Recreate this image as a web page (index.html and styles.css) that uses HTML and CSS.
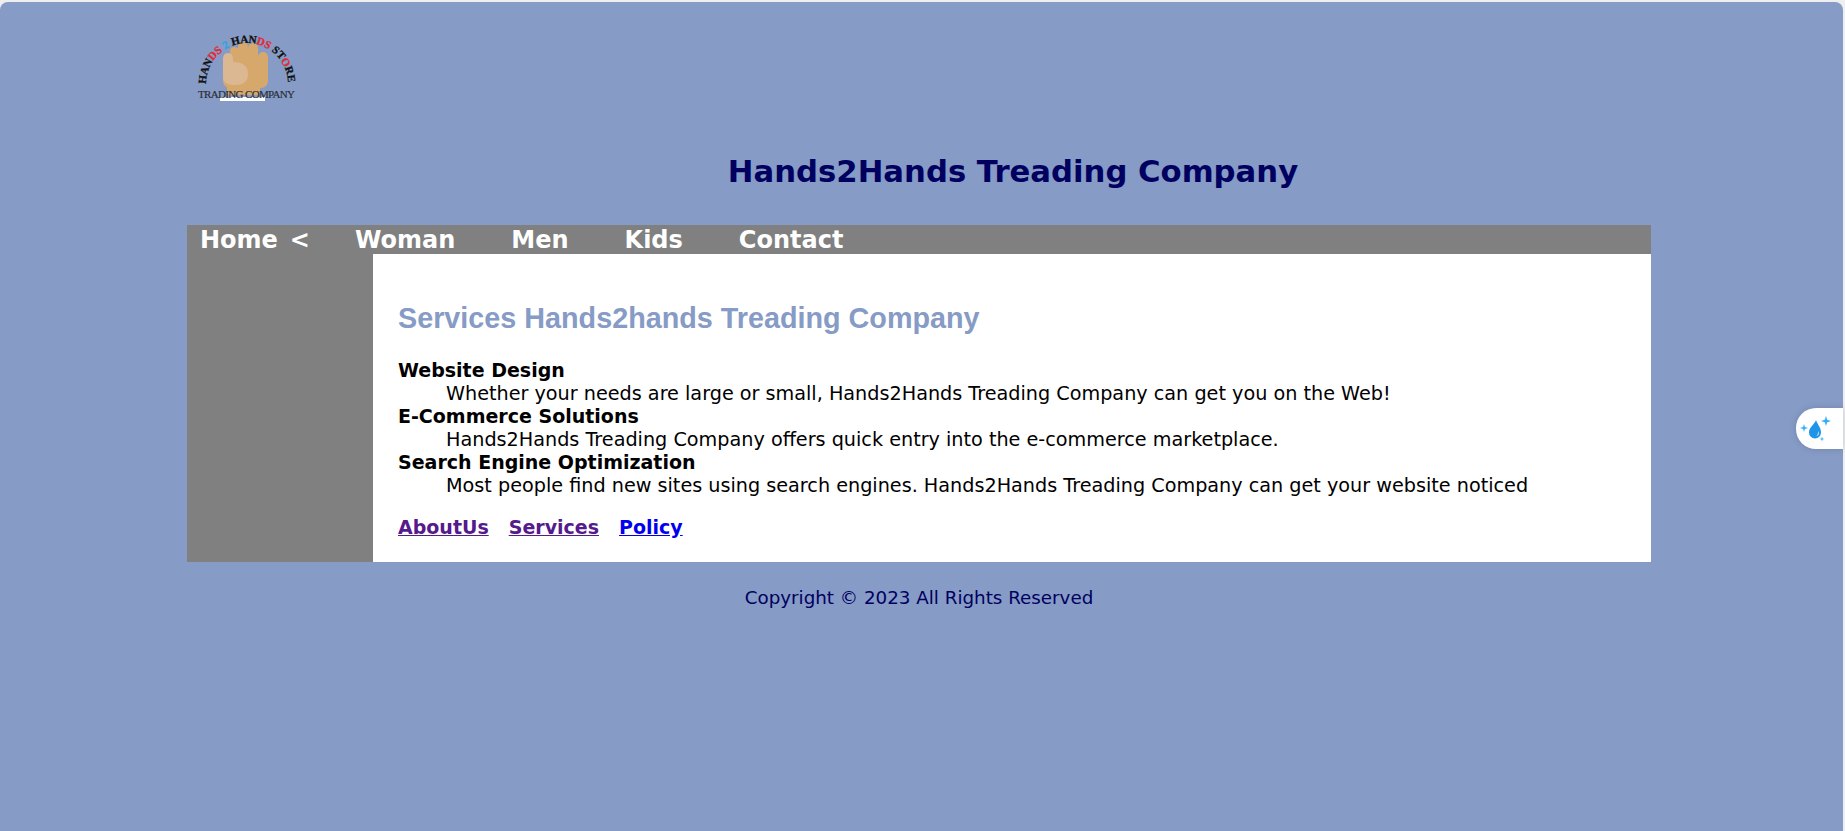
FILE: index.html
```html
<!DOCTYPE html>
<html lang="en">
<head>
<meta charset="utf-8">
<title>Services</title>
<link rel="stylesheet" href="styles.css">
</head>
<body>
<div class="page">
  <div class="wrap">
    <header class="header">
      <svg class="logo" width="120" height="80" viewBox="0 0 120 80" aria-hidden="true">
        <defs><filter id="soft"><feGaussianBlur stdDeviation="0.4"/></filter></defs>
        <g filter="url(#soft)">
          <g class="fist">
            <rect x="43" y="19" width="9" height="30" rx="4.500"/>
            <rect x="51" y="14" width="10" height="30" rx="5"/>
            <rect x="61" y="15" width="10" height="30" rx="5"/>
            <rect x="71" y="24" width="10" height="30" rx="5"/>
            <rect x="36" y="30" width="45" height="30" rx="7"/>
            <rect x="40" y="55" width="33" height="12"/>
          </g>
          <path class="thumb" d="M36 31q0-6 5-6t5 6v3q15 0 15 12 0 11-13 11-12 0-12-8z"/>
          <rect class="strip" x="33" y="69" width="45" height="4"/>
        </g>
        <path id="arc" d="M19 56A41 41 0 0 1 101 56" fill="none"/>
        <text class="logo-arc"><textPath href="#arc" textLength="127">HAN<tspan class="logo-red">DS</tspan> <tspan class="logo-blue">2</tspan> HAN<tspan class="logo-red">DS</tspan> ST<tspan class="logo-red">O</tspan>RE</textPath></text>
        <text class="logo-sub" x="11" y="70" textLength="97">TRADING COMPANY</text>
      </svg>
      <h1 class="title">Hands2Hands Treading Company</h1>
    </header>
    <nav class="nav">
      <a class="nav-link nav-home" href="#">Home&nbsp; &lt;</a>
      <a class="nav-link" href="#">Woman</a>
      <a class="nav-link" href="#">Men</a>
      <a class="nav-link" href="#">Kids</a>
      <a class="nav-link" href="#">Contact</a>
    </nav>
    <div class="body-row">
      <aside class="sidebar"></aside>
      <main class="content">
        <h2 class="heading">Services Hands2hands Treading Company</h2>
        <dl class="list">
          <dt>Website Design</dt>
          <dd>Whether your needs are large or small, Hands2Hands Treading Company can get you on the Web!</dd>
          <dt>E-Commerce Solutions</dt>
          <dd>Hands2Hands Treading Company offers quick entry into the e-commerce marketplace.</dd>
          <dt>Search Engine Optimization</dt>
          <dd>Most people find new sites using search engines. Hands2Hands Treading Company can get your website noticed</dd>
        </dl>
        <p class="links">
          <a class="visited" href="#">AboutUs</a>
          <a class="visited" href="#">Services</a>
          <a class="fresh" href="#">Policy</a>
        </p>
      </main>
    </div>
    <footer class="footer">Copyright © 2023 All Rights Reserved</footer>
  </div>
  <div class="float-tab">
    <svg width="47" height="41" viewBox="0 0 47 41" aria-hidden="true">
      <path d="M20 12c-1 4-7 7-7 12.500a6 6 0 0 0 12 0C25 19 21 16 20 12z" fill="#1f95e8"/>
      <path d="M22.500 23q1.500 4-2 5.500 1.500-2.500 2-5.500z" fill="#bfe3fb"/>
      <path d="M30 8l1.200 3.800L35 13l-3.800 1.200L30 18l-1.200-3.800L25 13l3.800-1.200z" fill="#35aef5"/>
      <path d="M8 16l.9 3.100L12 20l-3.100.9L8 24l-.9-3.100L4 20l3.100-.9z" fill="#35aef5"/>
      <path d="M26 28.500l.6 1.900 1.900.6-1.900.6-.6 1.900-.6-1.900-1.900-.6 1.900-.6z" fill="#35aef5"/>
    </svg>
  </div>
</div>
</body>
</html>
```
FILE: styles.css
```css
html, body {
  margin: 0;
  padding: 0;
  height: 100%;
  background: #efefef;
  overflow: hidden;
}
.page {
  position: relative;
  box-sizing: border-box;
  height: 829px;
  margin: 2px 2px 0 0;
  background: #869bc5;
  border-radius: 8px 8px 0 0;
  padding: 0 192px 0 187px;
  font-family: "DejaVu Sans", sans-serif;
}
.header {
  height: 223px;
  display: flex;
  flex-direction: column;
}
.logo {
  margin: 26px 0 0 0;
  display: block;
}
.fist {
  fill: #d6a86c;
}
.thumb {
  fill: #dbb892;
}
.strip {
  fill: #fff;
}
.logo-arc {
  font: bold 11px "Liberation Serif", serif;
  fill: #111;
  stroke: #111;
  stroke-width: 0.3px;
}
.logo-red {
  fill: #e02a35;
  stroke: #e02a35;
}
.logo-blue {
  fill: #2aa7e0;
  stroke: #2aa7e0;
}
.logo-sub {
  font: 11px "Liberation Serif", serif;
  fill: #2b2f3a;
  stroke: #2b2f3a;
  stroke-width: 0.2px;
}
.title {
  margin: 46px 0 0 0;
  text-align: center;
  padding-left: 188px;
  font-size: 30.700px;
  line-height: 36px;
  font-weight: bold;
  color: #000060;
}
.nav {
  display: flex;
  background: #808080;
  height: 29px;
  padding-left: 13px;
  gap: 56px;
}
.nav-link {
  color: #fff;
  font-weight: bold;
  font-size: 24px;
  line-height: 31px;
  text-decoration: none;
}
.nav-home {
  margin-right: -11px;
  word-spacing: -2.400px;
}
.body-row {
  display: flex;
  height: 308px;
}
.sidebar {
  width: 186px;
  background: #808080;
}
.content {
  flex: 1;
  background: #fff;
  padding: 48px 25px 0;
  color: #000;
}
.heading {
  margin: 0;
  font: bold 28.750px/32px "Liberation Sans", sans-serif;
  color: #869bc5;
}
.list {
  margin: 25px 0 0;
  font-size: 19.220px;
  line-height: 23px;
}
.list dt {
  font-weight: bold;
  font-size: 19px;
}
.list dd {
  margin: 0 0 0 48px;
}
.links {
  margin: 19px 0 0;
  font-size: 19px;
  line-height: 23px;
  font-weight: bold;
  display: flex;
  gap: 20px;
}
.visited {
  color: #551a8b;
}
.fresh {
  color: #0000ee;
}
.footer {
  margin-top: 25px;
  text-align: center;
  font-size: 18.300px;
  line-height: 21px;
  color: #000060;
}
.float-tab {
  position: absolute;
  right: 0;
  top: 406px;
  width: 47px;
  height: 41px;
  background: #fff;
  border-radius: 20px 0 0 20px;
  box-shadow: 0 0 6px rgba(60, 80, 120, .3);
}
.float-tab svg {
  display: block;
}
```
